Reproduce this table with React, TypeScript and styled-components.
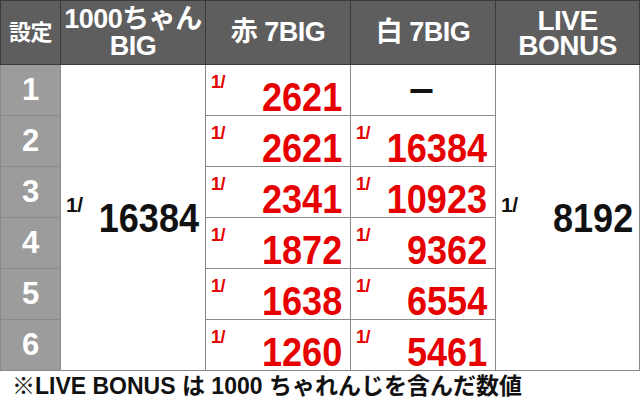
import React from "react";
import styled, { createGlobalStyle } from "styled-components";

const Global = createGlobalStyle`
  html, body { margin: 0; padding: 0; background: #fff; }
  body { font-family: "Liberation Sans", "Noto Sans CJK JP", sans-serif; }
`;

const COLS = "59px 144px 144px 144px 143px";

const Page = styled.div`
  width: 640px;
  height: 413px;
  background: #fff;
  font-family: "Liberation Sans", "Noto Sans CJK JP", sans-serif;
`;

const HeaderGrid = styled.div`
  display: grid;
  grid-template-columns: ${COLS};
  grid-template-rows: 63px;
  gap: 1px;
  padding: 1px;
  background: #3a3a3a;
`;

const HeadCell = styled.div<{ $size?: number; $lh?: number }>`
  background: #5e5e5e;
  color: #fff;
  font-weight: 700;
  font-size: ${(p) => p.$size ?? 27}px;
  line-height: ${(p) => p.$lh ?? 27}px;
  letter-spacing: -0.5px;
  display: flex;
  align-items: center;
  justify-content: center;
  text-align: center;
  white-space: pre-line;
`;

const BodyGrid = styled.div`
  display: grid;
  grid-template-columns: ${COLS};
  grid-template-rows: repeat(6, 50px);
  gap: 1px;
  padding: 0 1px 1px;
  background: #8a8a8a;
`;

const NumCell = styled.div`
  grid-column: 1;
  background: #9c9c9c;
  color: #fff;
  font-weight: 700;
  font-size: 31px;
  display: flex;
  align-items: center;
  justify-content: center;
`;

const SpanCell = styled.div<{ $col: number }>`
  grid-column: ${(p) => p.$col};
  grid-row: 1 / span 6;
  background: #fff;
  color: #111;
  display: flex;
  align-items: center;
  justify-content: space-between;
  padding: 0 6px 0 5px;
`;

const ProbCell = styled.div<{ $col: number }>`
  grid-column: ${(p) => p.$col};
  background: #fff;
  color: #e60000;
  display: flex;
  align-items: flex-start;
  justify-content: space-between;
  padding: 0 8px 0 5px;
`;

const DashCell = styled(ProbCell)`
  justify-content: center;
  align-items: center;
  color: #111;
`;

const Dash = styled.span`
  font-family: "Noto Sans CJK JP", sans-serif;
  font-weight: 700;
  font-size: 27px;
  line-height: 27px;
`;

const Prefix = styled.span<{ $big?: boolean }>`
  font-weight: 700;
  font-size: ${(p) => (p.$big ? 21 : 18)}px;
  line-height: ${(p) => (p.$big ? 21 : 18)}px;
  margin-top: ${(p) => (p.$big ? 0 : 8)}px;
  margin-bottom: ${(p) => (p.$big ? 26 : 0)}px;
  letter-spacing: -0.5px;
`;

const Num = styled.span<{ $top?: boolean }>`
  display: inline-block;
  font-weight: 700;
  font-size: 41px;
  line-height: 40px;
  margin-top: ${(p) => (p.$top ? 12 : 0)}px;
  transform: scaleX(0.88);
  transform-origin: right center;
`;

const Note = styled.div`
  font-weight: 700;
  font-size: 23px;
  line-height: 26px;
  color: #111;
  padding: 2px 0 0 12px;
  white-space: nowrap;
`;

const rows = [
  { n: "1", red: "2621", white: null as string | null },
  { n: "2", red: "2621", white: "16384" },
  { n: "3", red: "2341", white: "10923" },
  { n: "4", red: "1872", white: "9362" },
  { n: "5", red: "1638", white: "6554" },
  { n: "6", red: "1260", white: "5461" },
];

export default function App() {
  return (
    <Page>
      <Global />
      <HeaderGrid>
        <HeadCell $size={22}>設定</HeadCell>
        <HeadCell>{"1000ちゃん\nBIG"}</HeadCell>
        <HeadCell>赤 7BIG</HeadCell>
        <HeadCell>白 7BIG</HeadCell>
        <HeadCell $size={28} $lh={25}>{"LIVE\nBONUS"}</HeadCell>
      </HeaderGrid>
      <BodyGrid>
        <SpanCell $col={2}>
          <Prefix $big>1/</Prefix>
          <Num>16384</Num>
        </SpanCell>
        <SpanCell $col={5}>
          <Prefix $big>1/</Prefix>
          <Num>8192</Num>
        </SpanCell>
        {rows.map((r) => (
          <React.Fragment key={r.n}>
            <NumCell>{r.n}</NumCell>
            <ProbCell $col={3}>
              <Prefix>1/</Prefix>
              <Num $top>{r.red}</Num>
            </ProbCell>
            {r.white ? (
              <ProbCell $col={4}>
                <Prefix>1/</Prefix>
                <Num $top>{r.white}</Num>
              </ProbCell>
            ) : (
              <DashCell $col={4}>
                <Dash>ー</Dash>
              </DashCell>
            )}
          </React.Fragment>
        ))}
      </BodyGrid>
      <Note>※LIVE BONUS は 1000 ちゃれんじを含んだ数値</Note>
    </Page>
  );
}
